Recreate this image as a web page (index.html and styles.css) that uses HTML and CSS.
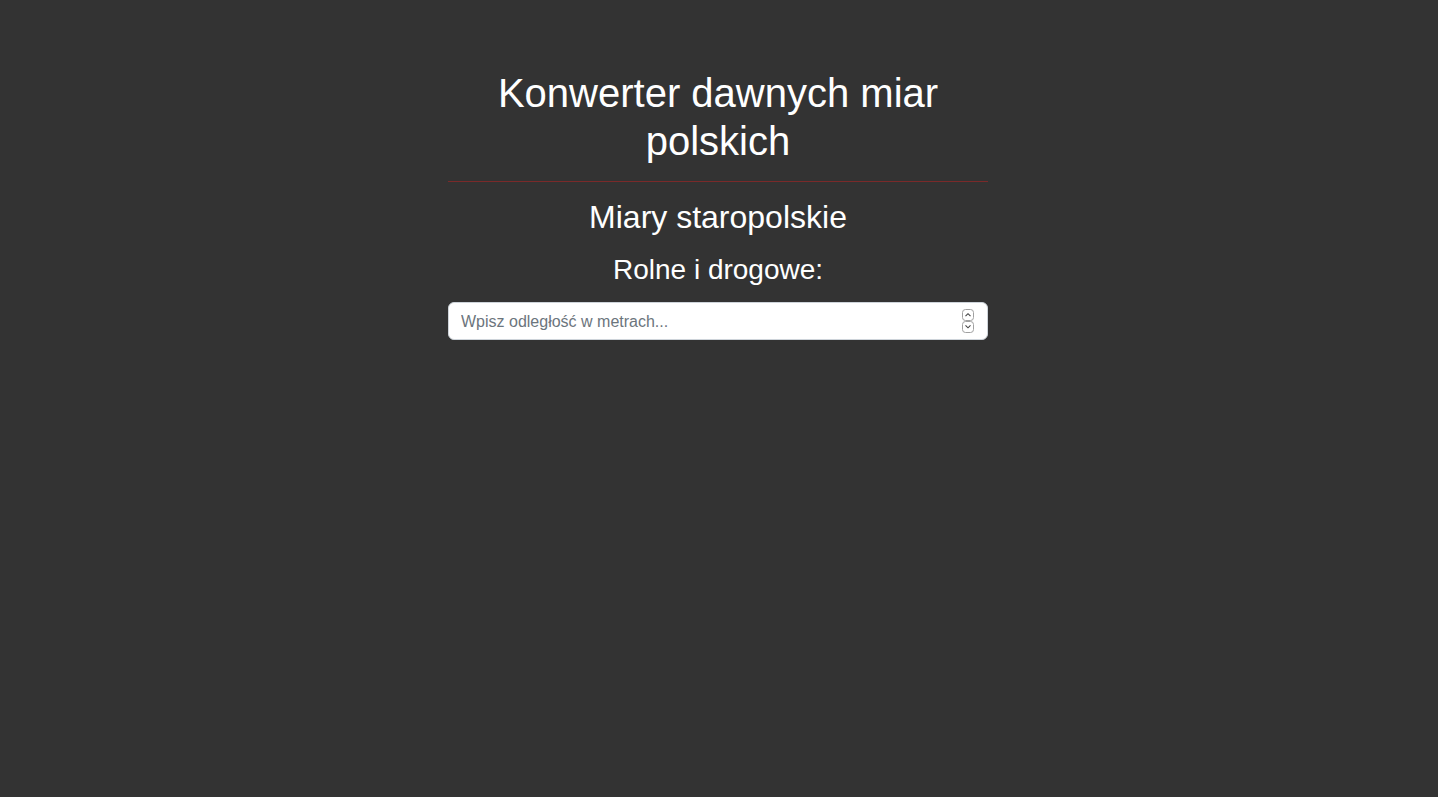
FILE: index.html
```html
<!DOCTYPE html>
<html lang="pl">
<head>
<meta charset="utf-8">
<title>Konwerter dawnych miar polskich</title>
<link rel="stylesheet" href="styles.css">
</head>
<body>
<main class="container">
  <h1 class="title">Konwerter dawnych miar polskich</h1>
  <hr class="divider">
  <h2 class="subtitle">Miary staropolskie</h2>
  <h3 class="section">Rolne i drogowe:</h3>
  <div class="field-wrap">
    <input class="field" type="number" placeholder="Wpisz odległość w metrach...">
    <svg class="spinner" width="13" height="24" viewBox="0 0 13 24" aria-hidden="true">
      <rect x="0.5" y="0.5" width="11" height="11" rx="3" fill="#fff" stroke="#a0a0a0"/>
      <path d="M3.5 7.2 L6 4.7 L8.5 7.2" fill="none" stroke="#444" stroke-width="1.1"/>
      <rect x="0.5" y="12.5" width="11" height="11" rx="3" fill="#fff" stroke="#a0a0a0"/>
      <path d="M3.5 16.3 L6 18.8 L8.5 16.3" fill="none" stroke="#444" stroke-width="1.1"/>
    </svg>
  </div>
</main>
</body>
</html>
```

FILE: styles.css
```css
* { box-sizing: border-box; }
html, body {
  margin: 0;
  background: #333333;
  color: #ffffff;
  font-family: "Liberation Sans", Arial, sans-serif;
}
body { min-height: 797px; }
.container {
  width: 540px;
  margin: 0 0 0 calc(50% - 271px);
  padding-top: 69px;
  text-align: center;
}
.title {
  margin: 0 0 8px;
  font-size: 40px;
  line-height: 1.2;
  font-weight: 400;
}
.divider {
  margin: 16px 0;
  border: 0;
  border-top: 1px solid #ff1a1a;
  opacity: 0.35;
}
.subtitle {
  margin: 0 0 8px;
  font-size: 32px;
  line-height: 1.2;
  font-weight: 400;
}
.section {
  margin: 17px 0 15px;
  font-size: 28px;
  line-height: 1.2;
  font-weight: 400;
}
.field-wrap {
  position: relative;
}
.field {
  display: block;
  width: 100%;
  height: 38px;
  padding: 7px 12px 5px;
  font-family: "Liberation Sans", Arial, sans-serif;
  font-size: 16px;
  line-height: 1.5;
  color: #212529;
  background: #ffffff;
  border: 1px solid #ced4da;
  border-radius: 6px;
  text-align: left;
  -moz-appearance: textfield;
}
.field::-webkit-inner-spin-button,
.field::-webkit-outer-spin-button {
  -webkit-appearance: none;
  margin: 0;
}
.field::placeholder { color: #6c757d; opacity: 1; }
.spinner {
  position: absolute;
  right: 13px;
  top: 7px;
}
```
